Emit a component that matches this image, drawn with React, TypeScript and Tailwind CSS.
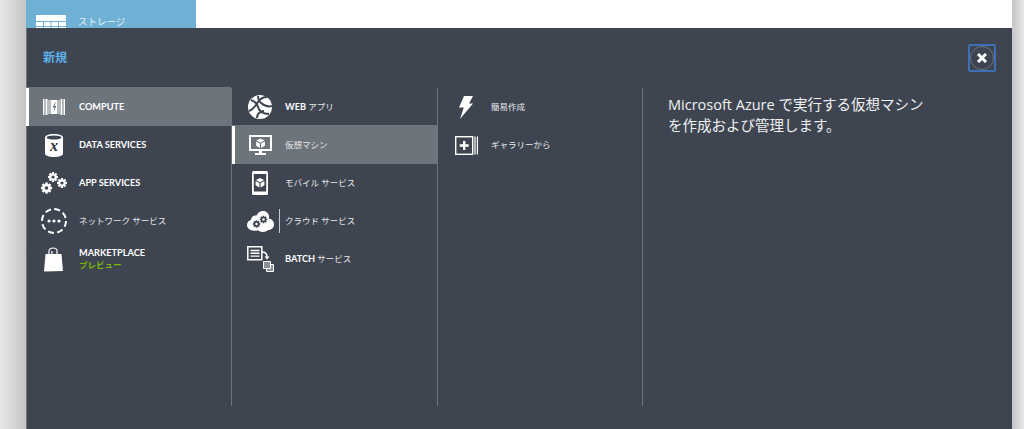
import type { ReactNode } from 'react';

const font = '[font-family:"Open_Sans","Noto_Sans_CJK_JP",sans-serif]';

function ComputeIcon() {
  return (
    <svg width="22" height="16" viewBox="0 0 22 16" fill="#fff">
      <path d="M0 0h1.500v16H0zM2.500 0h2v16h-2zM5.500 1h1v14h-1zM15.500 1h1v14h-1zM17.500 0h2v16h-2zM20.500 0H22v16h-1.500z" />
      <path fillRule="evenodd" d="M7.500 1h7v14h-7zM12.500 3 9.500 8.500h1.800l-1 4.500 3.200-6h-1.900l1.300-4z" />
    </svg>
  );
}

function DataIcon() {
  return (
    <svg width="18" height="23" viewBox="0 0 18 23">
      <path fill="#fff" d="M0 3.500C0 1.500 4 0 9 0s9 1.500 9 3.500v16C18 21.500 14 23 9 23s-9-1.500-9-3.500z" />
      <ellipse cx="9" cy="3.500" rx="7.500" ry="2" fill="#3e4551" />
      <text x="9" y="17" textAnchor="middle" fontSize="16" fontWeight="700" fontStyle="italic" fill="#2b303a" fontFamily="Liberation Serif, serif">x</text>
    </svg>
  );
}

function Gear({ cx, cy, r, color = '#fff', hole = '#3e4551' }: { cx: number; cy: number; r: number; color?: string; hole?: string }) {
  const teeth = [0, 45, 90, 135];
  return (
    <g>
      {teeth.map((a) => (
        <rect key={a} x={cx - r * 0.28} y={cy - r * 1.25} width={r * 0.56} height={r * 2.5} fill={color} transform={`rotate(${a} ${cx} ${cy})`} />
      ))}
      <circle cx={cx} cy={cy} r={r * 0.9} fill={color} />
      <circle cx={cx} cy={cy} r={r * 0.4} fill={hole} />
    </g>
  );
}

function AppIcon() {
  return (
    <svg width="26" height="22" viewBox="0 0 26 22">
      <Gear cx={5.500} cy={16} r={4.500} />
      <Gear cx={12} cy={5} r={4} />
      <Gear cx={21} cy={11} r={4} />
    </svg>
  );
}

function NetworkIcon() {
  return (
    <svg width="28" height="28" viewBox="0 0 28 28" fill="none">
      <circle cx="14" cy="14" r="12" stroke="#fff" strokeWidth="2" strokeDasharray="6 3.400" />
      <circle cx="9" cy="14" r="1.600" fill="#fff" />
      <circle cx="14" cy="14" r="1.600" fill="#fff" />
      <circle cx="19" cy="14" r="1.600" fill="#fff" />
    </svg>
  );
}

function BagIcon() {
  return (
    <svg width="20" height="25" viewBox="0 0 20 25" fill="none">
      <path fill="#fff" d="M1.500 7h16L19 24l-19 .5z" />
      <path stroke="#fff" strokeWidth="1.200" d="M5 8V4c0-4 8-4 8 0v4M8 4v4" />
    </svg>
  );
}

function GlobeIcon() {
  return (
    <svg width="24" height="24" viewBox="0 0 24 24" fill="none">
      <circle cx="12" cy="12" r="12" fill="#fff" />
      <path stroke="#3e4551" strokeWidth="2" d="M3 5c3 1 6 3 7 7s5 7 11 7M19 2c-4 0-7 2-9 5s-5 8-9 9M10 1c0 4 2 7 6 9s6 2 8 1M9 23c0-4 3-7 7-7" />
    </svg>
  );
}

function CubeMark({ x, y }: { x: number; y: number }) {
  return (
    <g transform={`translate(${x} ${y})`}>
      <path fill="#fff" d="M5 .5 9 2.500 5 4.700 1 2.500zM.6 3.400 4.400 5.500V10L.6 7.800zM9.400 3.400 5.600 5.500V10L9.400 7.800z" />
    </g>
  );
}

function VmIcon() {
  return (
    <svg width="23" height="21" viewBox="0 0 23 21">
      <path fill="#fff" d="M0 0h23v16H13v2h4v2H6v-2h4v-2H0z" />
      <rect x="2" y="2" width="19" height="12" fill="#6d747b" />
      <CubeMark x={6.500} y={3} />
    </svg>
  );
}

function MobileIcon() {
  return (
    <svg width="16" height="24" viewBox="0 0 16 24">
      <rect width="16" height="24" rx="1.500" fill="#fff" />
      <rect x="1.800" y="3" width="12.400" height="17.500" fill="#3e4551" />
      <CubeMark x={3} y={6.500} />
    </svg>
  );
}

function CloudIcon() {
  return (
    <svg width="27" height="21" viewBox="0 0 27 21">
      <path fill="#fff" d="M6 19.500c-3 0-6-2.500-6-5.500 0-2.500 1.500-4.500 4-5C4 6 6.500 4 9.500 4.500 10.500 2 13 0 16 0c3.500 0 6 2.500 6 5.500 0 .8 0 1.300-.3 2C25 8 27 10.500 27 13.500c0 3-2.500 5.500-6 5.500-1 1.300-3 2-5 2-2 0-4-.6-5-1.800-1.500.6-3.500.6-5 .3z" />
      <Gear cx={9.500} cy={13} r={3} color="#3e4551" hole="#fff" />
      <Gear cx={16.500} cy={8.500} r={3} color="#3e4551" hole="#fff" />
    </svg>
  );
}

function BatchIcon() {
  return (
    <svg width="27" height="26" viewBox="0 0 27 26" fill="none" stroke="#fff">
      <path strokeWidth="1.500" d="M.8.800h14v13H.8z" />
      <path strokeWidth="1.400" d="M3.500 4.500h9M3.500 7.300h9M3.500 10.100h9" />
      <path strokeWidth="1.500" d="M15 6c3.500 0 5 2 5 5" />
      <path fill="#fff" stroke="none" d="M17.500 10.500h5l-2.500 3.200z" />
      <path fill="#8a9098" strokeWidth="1" d="M19.500 18.500h7v7h-7z" />
      <path fill="#8a9098" strokeWidth="1" d="M16.500 15.500h7v7h-7z" />
    </svg>
  );
}

function BoltIcon() {
  return (
    <svg width="14" height="23" viewBox="0 0 14 23">
      <path fill="#fff" d="M5 0h9L10 7.500h4L1 23l3.800-11.500H0z" />
    </svg>
  );
}

function GalleryIcon() {
  return (
    <svg width="23" height="19" viewBox="0 0 23 19" fill="none" stroke="#fff">
      <rect x=".7" y=".7" width="17" height="17.600" strokeWidth="1.400" />
      <path strokeWidth="2.400" d="M9.200 5v9M4.700 9.500h9" />
      <path strokeWidth="1.200" d="M20 .5v18M22.400.5v18" />
    </svg>
  );
}

function CloseIcon() {
  return (
    <div className="flex size-[28px] items-center justify-center rounded-[2px] border-2 border-[#3f6fb5]">
      <div className="flex size-[24px] items-center justify-center rounded-full border border-[#6d747e]">
        <svg width="10" height="10" viewBox="0 0 10 10" stroke="#fff" strokeWidth="3">
          <path d="M1 1l8 8M9 1l-8 8" />
        </svg>
      </div>
    </div>
  );
}

type RowProps = {
  icon: ReactNode;
  children: ReactNode;
  active?: boolean;
};

function Row({ icon, children, active }: RowProps) {
  return (
    <div className={`flex h-[38px] items-center border-l-[3px] ${active ? 'border-white bg-[#6d747b] shadow-[0_-1px_0_#6d747b]' : 'border-transparent'}`}>
      <div className="flex w-[50px] shrink-0 items-center justify-center">{icon}</div>
      <div className="min-w-0 text-[8.5px] leading-[12px] text-[#e8e9ea]">{children}</div>
    </div>
  );
}

const Strong = ({ children }: { children: ReactNode }) => (
  <span className='text-[9.2px] font-bold text-white [font-family:"Lato","Noto_Sans_CJK_JP",sans-serif]'>{children}</span>
);

export default function App() {
  return (
    <div className={`flex h-[429px] w-[1024px] overflow-hidden bg-white ${font}`}>
      <div className="w-[26px] shrink-0 bg-gradient-to-r from-[#e8e8e8] to-[#c4c4c4]" />

      <div className="flex w-[986px] shrink-0 flex-col">
        <div className="flex h-[28px] shrink-0">
          <div className="flex w-[170px] items-start gap-[12px] overflow-hidden bg-[#6fb1d5] pl-[10px] pt-[15px]">
            <svg width="30" height="13" viewBox="0 0 30 13" className="shrink-0">
              <rect width="30" height="13" fill="#fff" />
              <path stroke="#6fb1d5" d="M0 6.500h30M0 11.500h30M7.500 6v7M15 6v7M22.500 6v7" />
            </svg>
            <span className="text-[9.500px] leading-[14px] text-[#e8f3f9]">ストレージ</span>
          </div>
        </div>

        <div className="flex min-h-0 flex-1 flex-col border-l border-[#6d747b] bg-[#3e4551]">
          <div className="flex h-[60px] shrink-0 items-start justify-between pr-[16px]">
            <div className="pl-[16px] pt-[22px] text-[12px] font-bold leading-[16px] text-[#5fb2ec]">新規</div>
            <div className="pt-[16px]">
              <CloseIcon />
            </div>
          </div>

          <div className="flex h-[318px] shrink-0">
            <div className="-ml-px w-[206px] shrink-0 border-r border-[#6d747b]">
              <Row active icon={<ComputeIcon />}>
                <Strong>COMPUTE</Strong>
              </Row>
              <Row icon={<DataIcon />}>
                <Strong>DATA SERVICES</Strong>
              </Row>
              <Row icon={<AppIcon />}>
                <Strong>APP SERVICES</Strong>
              </Row>
              <Row icon={<NetworkIcon />}>ネットワーク サービス</Row>
              <Row icon={<BagIcon />}>
                <div>
                  <Strong>MARKETPLACE</Strong>
                </div>
                <div className="font-bold text-[#7ab800]">プレビュー</div>
              </Row>
            </div>

            <div className="w-[206px] shrink-0 border-r border-[#6d747b]">
              <Row icon={<GlobeIcon />}>
                <Strong>WEB</Strong> アプリ
              </Row>
              <Row active icon={<VmIcon />}>
                仮想マシン
              </Row>
              <Row icon={<MobileIcon />}>モバイル サービス</Row>
              <Row icon={<CloudIcon />}>
                <span className="-ml-[6px] flex items-center gap-[5px]">
                  <span className="h-[24px] w-px bg-[#c9cbce]" />
                  クラウド サービス
                </span>
              </Row>
              <Row icon={<BatchIcon />}>
                <Strong>BATCH</Strong> サービス
              </Row>
            </div>

            <div className="w-[205px] shrink-0 border-r border-[#6d747b]">
              <Row icon={<BoltIcon />}>簡易作成</Row>
              <Row icon={<GalleryIcon />}>ギャラリーから</Row>
            </div>

            <div className="flex-1 pl-[25px] pt-[6px]">
              <p className="w-[265px] text-[14.500px] leading-[21px] text-[#f0f1f2]">
                Microsoft Azure で実行する仮想マシンを作成および管理します。
              </p>
            </div>
          </div>
        </div>
      </div>

      <div className="flex-1 bg-gradient-to-r from-[#c4c4c4] to-[#e8e8e8]" />
    </div>
  );
}
